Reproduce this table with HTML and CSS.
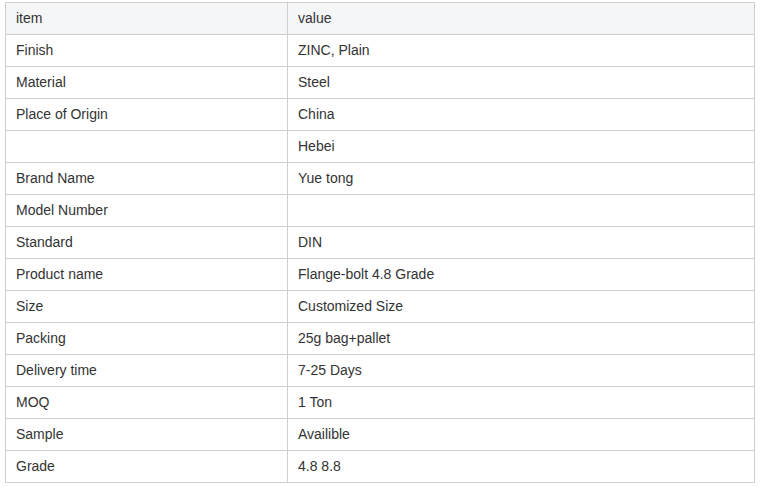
FILE: index.html
```html
<!DOCTYPE html>
<html>
<head>
<meta charset="utf-8">
<link rel="stylesheet" href="styles.css">
</head>
<body>
<table class="spec">
  <thead>
    <tr><th class="c1">item</th><th>value</th></tr>
  </thead>
  <tbody>
    <tr><td>Finish</td><td>ZINC, Plain</td></tr>
    <tr><td>Material</td><td>Steel</td></tr>
    <tr><td>Place of Origin</td><td>China</td></tr>
    <tr><td></td><td>Hebei</td></tr>
    <tr><td>Brand Name</td><td>Yue tong</td></tr>
    <tr><td>Model Number</td><td></td></tr>
    <tr><td>Standard</td><td>DIN</td></tr>
    <tr><td>Product name</td><td>Flange-bolt 4.8 Grade</td></tr>
    <tr><td>Size</td><td>Customized Size</td></tr>
    <tr><td>Packing</td><td>25g bag+pallet</td></tr>
    <tr><td>Delivery time</td><td>7-25 Days</td></tr>
    <tr><td>MOQ</td><td>1 Ton</td></tr>
    <tr><td>Sample</td><td>Availible</td></tr>
    <tr><td>Grade</td><td>4.8 8.8</td></tr>
  </tbody>
</table>
</body>
</html>
```

FILE: styles.css
```css
html, body {
  margin: 0;
  padding: 0;
  background: #fff;
}
body {
  padding: 2px 5px;
  font-family: "Liberation Sans", Arial, sans-serif;
  font-size: 14px;
  color: #333;
}
.spec {
  border-collapse: collapse;
  width: 750px;
  table-layout: fixed;
}
.spec th, .spec td {
  border: 1px solid #cfcfcf;
  height: 31px;
  padding: 0 10px 2px;
  text-align: left;
  font-weight: normal;
  vertical-align: middle;
  box-sizing: border-box;
}
.spec tr {
  height: 32px;
}
.spec th {
  background: #f5f6f8;
}
.spec .c1 {
  width: 282px;
}
```
